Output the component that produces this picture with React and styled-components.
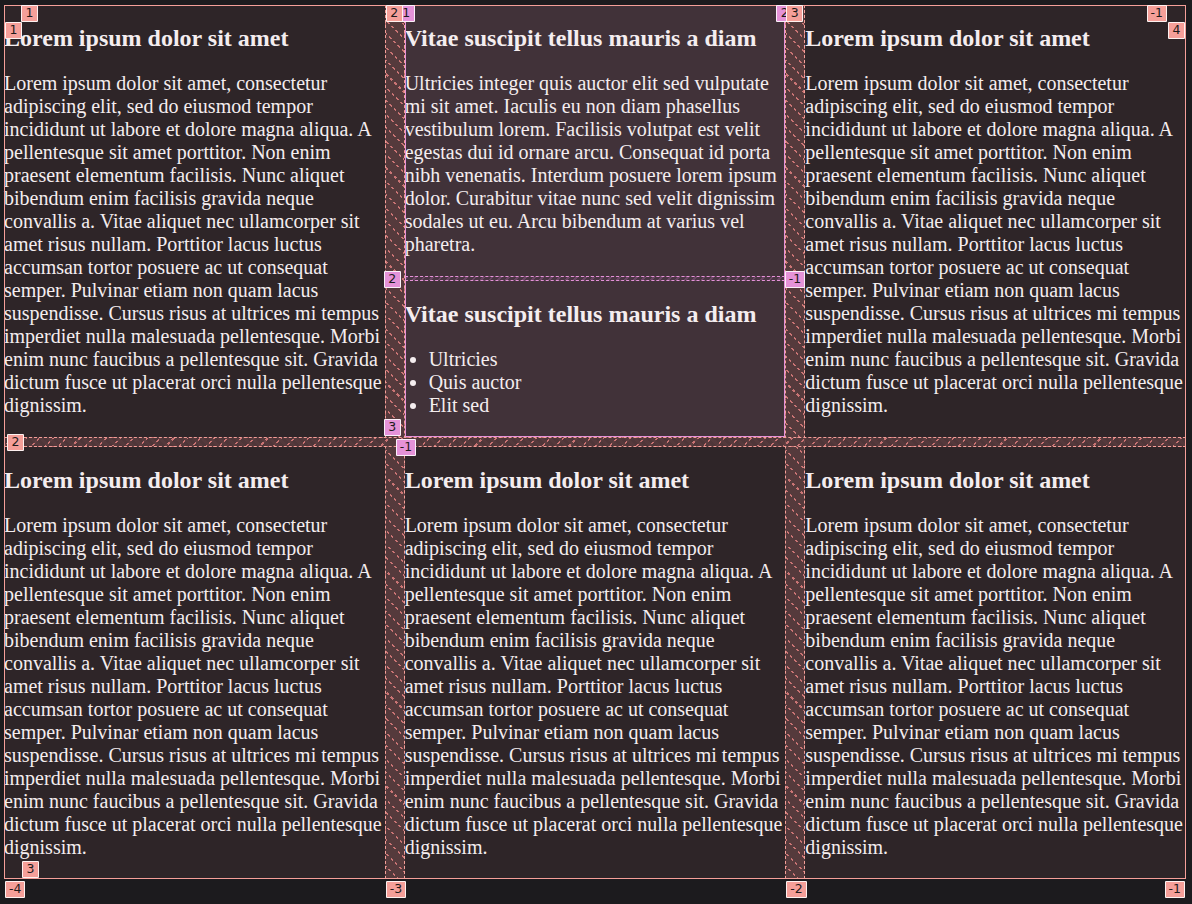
import React from 'react'
import styled, { createGlobalStyle, css } from 'styled-components'

const lorem = 'Lorem ipsum dolor sit amet, consectetur adipiscing elit, sed do eiusmod tempor incididunt ut labore et dolore magna aliqua. A pellentesque sit amet porttitor. Non enim praesent elementum facilisis. Nunc aliquet bibendum enim facilisis gravida neque convallis a. Vitae aliquet nec ullamcorper sit amet risus nullam. Porttitor lacus luctus accumsan tortor posuere ac ut consequat semper. Pulvinar etiam non quam lacus suspendisse. Cursus risus at ultrices mi tempus imperdiet nulla malesuada pellentesque. Morbi enim nunc faucibus a pellentesque sit. Gravida dictum fusce ut placerat orci nulla pellentesque dignissim.'

const vitae = 'Ultricies integer quis auctor elit sed vulputate mi sit amet. Iaculis eu non diam phasellus vestibulum lorem. Facilisis volutpat est velit egestas dui id ornare arcu. Consequat id porta nibh venenatis. Interdum posuere lorem ipsum dolor. Curabitur vitae nunc sed velit dignissim sodales ut eu. Arcu bibendum at varius vel pharetra.'

const SALMON = '#f59f99'
const PINK = '#e592d8'

const GlobalStyle = createGlobalStyle`
  html, body {
    margin: 0;
    background: #1c1b1e;
  }
  body {
    font-family: "Liberation Serif", "Times New Roman", serif;
    font-size: 20px;
    color: #f4edef;
  }
`

const Page = styled.div`
  padding: 5px 6px 24px 4px;
`

const Grid = styled.div`
  position: relative;
  display: grid;
  grid-template-columns: 1fr 20px 1fr 20px 1fr;
  grid-template-rows: auto 10px auto;
  background: #2e2528;

  &::after {
    content: '';
    position: absolute;
    inset: 0;
    border: 1px solid ${SALMON};
    pointer-events: none;
    z-index: 3;
  }
`

const ColumnGap = styled.div`
  position: relative;
  grid-column: ${({ $col }) => $col};
  grid-row: 1 / -1;
  box-sizing: border-box;
  border-left: 1px dashed ${SALMON};
  border-right: 1px dashed ${SALMON};
  background-color: #553a3c;
  background-image:
    repeating-linear-gradient(-45deg, #553a3c 0 3px, transparent 3px 6px),
    repeating-linear-gradient(45deg, transparent 0 8px, rgba(230,130,130,0.8) 8px 9.5px);
`

const RowGap = styled.div`
  position: relative;
  grid-column: 1 / -1;
  grid-row: 2;
  box-sizing: border-box;
  border-top: 1px dashed ${SALMON};
  border-bottom: 1px dashed ${SALMON};
  background-color: rgba(85, 58, 60, 0.85);
  background-image:
    repeating-linear-gradient(45deg, rgba(85,58,60,0.9) 0 3px, transparent 3px 6px),
    repeating-linear-gradient(-45deg, transparent 0 8px, rgba(230,130,130,0.8) 8px 9.5px);
`

const Cell = styled.div`
  grid-column: ${({ $col }) => $col};
  grid-row: ${({ $row }) => $row};
  min-width: 0;
`

const Nested = styled.div`
  position: relative;
  grid-column: 3;
  grid-row: 1;
  display: grid;
  grid-template-rows: auto 5px auto;
  background: #413239;

  &::after {
    content: '';
    position: absolute;
    inset: 0;
    border: 1px solid ${PINK};
    pointer-events: none;
    z-index: 3;
  }
`

const NestedGap = styled.div`
  position: relative;
  box-sizing: border-box;
  border-top: 1px dashed ${PINK};
  border-bottom: 1px dashed ${PINK};
  background: repeating-linear-gradient(-45deg, #4a3643 0 4px, #6a4563 4px 6px);
`

const Title = styled.h2`
  margin: 20px 0;
  font-size: 24px;
  font-weight: bold;
  line-height: normal;
`

const Text = styled.p`
  margin: 20px 0;
`

const List = styled.ul`
  margin: 20px 0;
  padding-left: 24px;
`

const Badge = styled.span`
  position: absolute;
  box-sizing: border-box;
  height: 17px;
  min-width: 17px;
  padding: 0 3px;
  display: flex;
  align-items: center;
  justify-content: center;
  border: 1px solid rgba(255, 255, 255, 0.85);
  border-radius: 1px;
  background: ${({ $pink }) => ($pink ? PINK : SALMON)};
  color: #1e1a1b;
  font-family: "DejaVu Sans", "Liberation Sans", sans-serif;
  font-size: 12.5px;
  line-height: 1;
  z-index: ${({ $pink }) => ($pink ? 5 : 6)};
  ${({ $top }) => $top !== undefined && css`top: ${$top}px;`}
  ${({ $left }) => $left !== undefined && css`left: ${$left}px;`}
  ${({ $right }) => $right !== undefined && css`right: ${$right}px;`}
  ${({ $bottom }) => $bottom !== undefined && css`bottom: ${$bottom}px;`}
`

const LoremCell = ({ col, row }) => (
  <Cell $col={col} $row={row}>
    <Title>Lorem ipsum dolor sit amet</Title>
    <Text>{lorem}</Text>
  </Cell>
)

const App = () => (
  <>
    <GlobalStyle />
    <Page>
      <Grid>
        <LoremCell col={1} row={1} />
        <Nested>
          <div>
            <Title>Vitae suscipit tellus mauris a diam</Title>
            <Text>{vitae}</Text>
          </div>
          <NestedGap>
            <Badge $pink $left={-21} $top={-6}>2</Badge>
            <Badge $pink $right={-20} $top={-6}>-1</Badge>
          </NestedGap>
          <div>
            <Title>Vitae suscipit tellus mauris a diam</Title>
            <List>
              <li>Ultricies</li>
              <li>Quis auctor</li>
              <li>Elit sed</li>
            </List>
          </div>
          <Badge $pink $left={-7} $top={0}>1</Badge>
          <Badge $pink $right={-8} $top={0}>2</Badge>
          <Badge $pink $left={-21} $bottom={1}>3</Badge>
          <Badge $pink $left={-9} $bottom={-19}>-1</Badge>
        </Nested>
        <LoremCell col={5} row={1} />
        <LoremCell col={1} row={3} />
        <LoremCell col={3} row={3} />
        <LoremCell col={5} row={3} />

        <ColumnGap $col={2}>
          <Badge $left={0} $top={0}>2</Badge>
          <Badge $left={0} $bottom={-19}>-3</Badge>
        </ColumnGap>
        <ColumnGap $col={4}>
          <Badge $left={0} $top={0}>3</Badge>
          <Badge $left={0} $bottom={-19}>-2</Badge>
        </ColumnGap>
        <RowGap>
          <Badge $left={3} $top={-4}>2</Badge>
        </RowGap>

        <Badge $left={17} $top={0}>1</Badge>
        <Badge $left={1} $top={17}>1</Badge>
        <Badge $right={19} $top={0}>-1</Badge>
        <Badge $right={1} $top={17}>4</Badge>
        <Badge $left={18} $bottom={1}>3</Badge>
        <Badge $left={1} $bottom={-19}>-4</Badge>
        <Badge $right={1} $bottom={-19}>-1</Badge>
      </Grid>
    </Page>
  </>
)

export default App
